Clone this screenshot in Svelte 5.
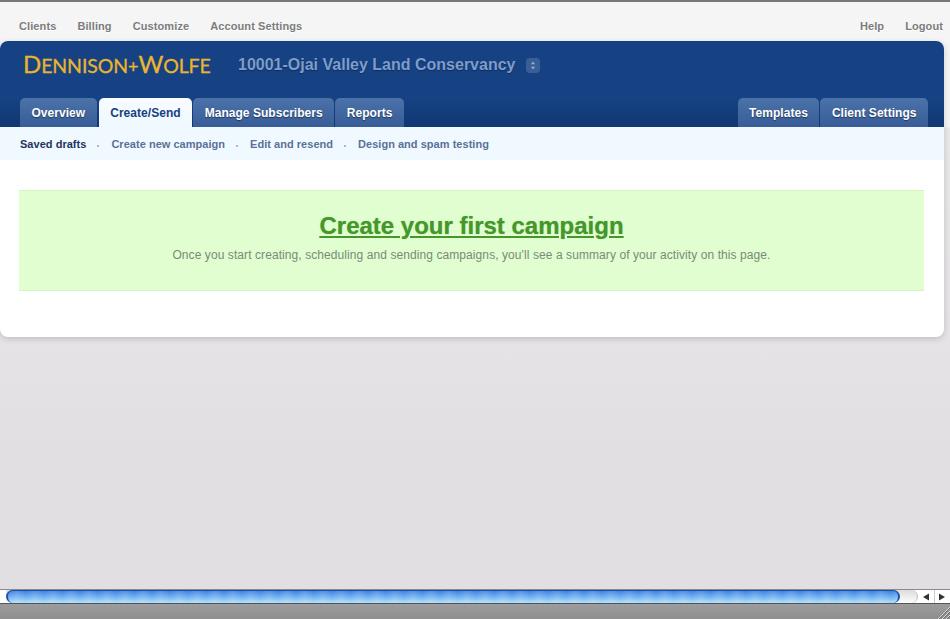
<script lang="ts">
  const topLeft = ['Clients', 'Billing', 'Customize', 'Account Settings'];
  const topRight = ['Help', 'Logout'];
  const tabs = ['Overview', 'Create/Send', 'Manage Subscribers', 'Reports'];
  const rightTabs = ['Templates', 'Client Settings'];
  const subnav = ['Saved drafts', 'Create new campaign', 'Edit and resend', 'Design and spam testing'];
</script>

<div class="window">
  <div class="top-edge"></div>
  <div class="page">
    <nav class="top-nav">
      <div class="top-links">
        {#each topLeft as link}
          <span>{link}</span>
        {/each}
      </div>
      <div class="top-links">
        {#each topRight as link}
          <span>{link}</span>
        {/each}
      </div>
    </nav>

    <div class="card">
      <header class="header">
        <div class="brand-row">
          <span class="logo"><span class="cap">D</span>ennison<span class="plus">+</span><span class="cap">W</span>olfe</span>
          <span class="client">10001-Ojai Valley Land Conservancy</span>
          <span class="switcher">
            <svg width="6" height="9" viewBox="0 0 6 9"><path d="M3 0.5 L5.2 3.2 H0.8 Z M3 8.5 L0.8 5.8 H5.2 Z" fill="#8fa9d0" /></svg>
          </span>
        </div>
        <div class="tab-row">
          <div class="tabs">
            {#each tabs as tab, i}
              <span class="tab" class:active={i === 1}>{tab}</span>
            {/each}
          </div>
          <div class="tabs">
            {#each rightTabs as tab}
              <span class="tab">{tab}</span>
            {/each}
          </div>
        </div>
      </header>

      <div class="subnav">
        {#each subnav as item, i}
          {#if i > 0}<span class="dot"></span>{/if}
          <span class="sub-item" class:current={i === 0}>{item}</span>
        {/each}
      </div>

      <section class="content">
        <div class="banner">
          <a class="headline" href="#first">Create your first campaign</a>
          <p>Once you start creating, scheduling and sending campaigns, you'll see a summary of your activity on this page.</p>
        </div>
      </section>
    </div>
  </div>

  <div class="scrollbar">
    <div class="track">
      <div class="capsule">
        <div class="thumb"></div>
      </div>
    </div>
    <div class="arrows">
      <span class="arrow">
        <svg width="8" height="8" viewBox="0 0 8 8"><path d="M1 4 L7 0.5 V7.5 Z" fill="#333" /></svg>
      </span>
      <span class="arrow">
        <svg width="8" height="8" viewBox="0 0 8 8"><path d="M7 4 L1 0.5 V7.5 Z" fill="#333" /></svg>
      </span>
    </div>
  </div>
  <div class="status">
    <svg class="grip" width="14" height="14" viewBox="0 0 14 14">
      <path d="M14 2 L2 14 M14 6 L6 14 M14 10 L10 14" stroke="#d8d8d8" stroke-width="1" fill="none" />
      <path d="M14 3 L3 14 M14 7 L7 14 M14 11 L11 14" stroke="#6c6c6c" stroke-width="1" fill="none" />
    </svg>
  </div>
</div>

<style>
  :global(body) {
    margin: 0;
    background: #e1dfe1;
  }

  .window {
    width: 950px;
    height: 619px;
    display: flex;
    flex-direction: column;
    overflow: hidden;
    font-family: "Liberation Sans", Arial, sans-serif;
  }

  .top-edge {
    height: 2px;
    background: #77777a;
    flex-shrink: 0;
  }

  .page {
    height: 587px;
    flex-shrink: 0;
    background: linear-gradient(to bottom, #f5f5f5 0, #f5f5f5 125px, #e9e8e9 126px, #e5e3e5 340px, #e1dfe1 450px);
  }

  /* Top nav */
  .top-nav {
    height: 39px;
    display: flex;
    justify-content: space-between;
    padding: 17px 7px 0 19px;
    background: #f5f5f5;
    box-sizing: border-box;
  }
  .top-links {
    display: flex;
    gap: 21px;
    font-size: 11px;
    line-height: 14px;
    font-weight: bold;
    color: #7c7c7c;
    letter-spacing: 0.1px;
    text-shadow: 0 1px 0 #fff;
  }

  /* Card */
  .card {
    width: 944px;
    height: 296px;
    border-radius: 8px;
    background: #fff;
    box-shadow: 0 2px 6px rgba(0, 0, 0, 0.16);
    overflow: hidden;
  }

  .header {
    height: 86px;
    background: linear-gradient(to bottom, #164182 0, #164182 60px, #103773 86px);
    display: flex;
    flex-direction: column;
  }
  .brand-row {
    height: 57px;
    display: flex;
    align-items: center;
    padding: 0 0 9px 23px;
    box-sizing: border-box;
  }
  .logo {
    font-family: Lato, "Liberation Sans", sans-serif;
    text-transform: uppercase;
    font-size: 19.5px;
    line-height: 28px;
    letter-spacing: -0.1px;
    color: #eab52e;
    width: 215px;
    white-space: nowrap;
    -webkit-text-stroke: 0.3px #eab52e;
  }
  .cap {
    font-size: 24px;
  }
  .plus {
    font-size: 18px;
  }
  .client {
    font-size: 16px;
    font-weight: bold;
    color: #7e9dcb;
    text-shadow: 0 1px 1px rgba(0, 0, 0, 0.3);
  }
  .switcher {
    width: 14px;
    height: 15px;
    margin-left: 11px;
    border-radius: 4px;
    background: #3a5f98;
    display: flex;
    align-items: center;
    justify-content: center;
  }

  /* Tabs */
  .tab-row {
    display: flex;
    justify-content: space-between;
    padding: 0 16px 0 20px;
  }
  .tabs {
    display: flex;
    gap: 1px;
  }
  .tab {
    height: 29px;
    line-height: 30px;
    padding: 0 11.5px;
    border-radius: 5px 5px 0 0;
    background: linear-gradient(to bottom, #4c72aa, #375c97);
    color: #fff;
    font-size: 12px;
    font-weight: bold;
    letter-spacing: 0.04px;
    text-shadow: 0 1px 1px rgba(0, 0, 0, 0.45);
  }
  .tab.active {
    margin-left: 1px;
    background: linear-gradient(to bottom, #f9fcff, #eef8ff);
    color: #16417f;
    text-shadow: none;
  }

  /* Subnav */
  .subnav {
    height: 33px;
    display: flex;
    align-items: center;
    padding: 0 0 0 20px;
    background: #f0f9ff;
    font-size: 11px;
    font-weight: bold;
    color: #5a7198;
    letter-spacing: 0.03px;
    box-sizing: border-box;
  }
  .sub-item.current {
    color: #1e3560;
  }
  .dot {
    width: 2px;
    height: 2px;
    margin: 5px 12px 0 11px;
    background: #a9b8cc;
  }

  /* Content */
  .content {
    padding: 30px 20px 0 19px;
  }
  .banner {
    height: 101px;
    box-sizing: border-box;
    background: #e0fed0;
    border-top: 1px solid #d2f4bf;
    border-bottom: 1px solid #d2f4bf;
    text-align: center;
    padding-top: 20px;
  }
  .headline {
    font-size: 24px;
    line-height: 30px;
    font-weight: bold;
    color: #46962c;
    text-decoration: underline;
    text-decoration-thickness: 1.5px;
    text-underline-offset: 2px;
    text-shadow: 0 0 1px rgba(68, 147, 42, 0.6);
    display: block;
  }
  .banner p {
    margin: 6px 0 0;
    font-size: 12px;
    line-height: 16px;
    letter-spacing: 0.08px;
    color: #7c8a76;
  }

  /* Scrollbar */
  .scrollbar {
    height: 15px;
    flex-shrink: 0;
    display: flex;
    background: #f4f4f4;
    border-top: 1px solid #8a8a8a;
    border-bottom: 1px solid #555;
    box-sizing: border-box;
  }
  .track {
    flex: 1;
    padding-left: 6px;
    background: #fff;
  }
  .capsule {
    height: 100%;
    border-radius: 0 7px 7px 0;
    border-right: 1px solid #bbb;
    padding-right: 17px;
    background: linear-gradient(to bottom, #dcdcdc, #fdfdfd);
  }
  .thumb {
    height: 100%;
    border-radius: 7px;
    box-sizing: border-box;
    border-left: 2px solid #1c4fa6;
    border-right: 2px solid #1c4fa6;
    border-top: 1px solid #1c4fa6;
    background:
      repeating-linear-gradient(to right, rgba(255, 255, 255, 0) 0, rgba(255, 255, 255, 0.14) 9px, rgba(255, 255, 255, 0) 18px),
      linear-gradient(to bottom, #3f7fdd 0, #5c9fec 30%, #7cb9f3 60%, #a8d8fb 90%);
  }
  .arrows {
    display: flex;
    background: #fff;
  }
  .arrow {
    width: 15.5px;
    display: flex;
    align-items: center;
    justify-content: center;
    border-left: 1px solid #ccc;
  }
  .arrow:first-child {
    border-left: none;
  }
  .status {
    flex: 1;
    position: relative;
    background: linear-gradient(to bottom, #9c9c9c, #8e8e8e);
  }
  .grip {
    position: absolute;
    right: 0;
    bottom: 0;
  }
</style>
